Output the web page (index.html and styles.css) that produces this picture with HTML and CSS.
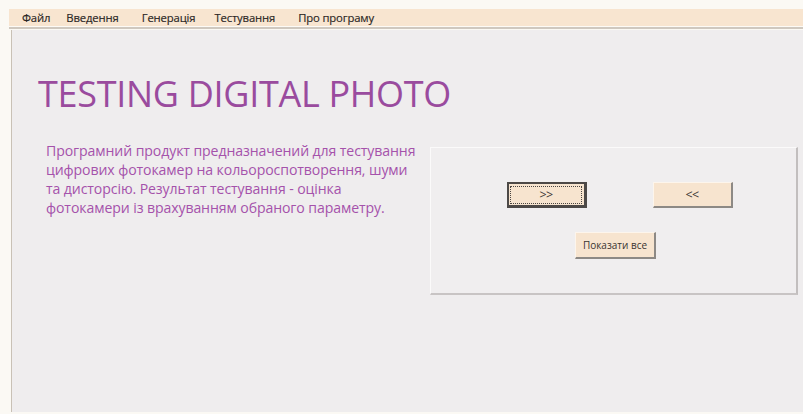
FILE: index.html
```html
<!DOCTYPE html>
<html lang="uk">
<head>
<meta charset="utf-8">
<title>Testing Digital Photo</title>
<link rel="stylesheet" href="styles.css">
</head>
<body>
<div class="app">
  <nav class="menubar">
    <span class="menu-item">Файл</span>
    <span class="menu-item">Введення</span>
    <span class="menu-item">Генерація</span>
    <span class="menu-item">Тестування</span>
    <span class="menu-item">Про програму</span>
  </nav>
  <main class="workspace">
    <h1 class="title">TESTING DIGITAL PHOTO</h1>
    <div class="content">
      <p class="intro">Програмний продукт предназначений для тестування цифрових фотокамер на кольороспотворення, шуми та дисторсію. Результат тестування - оцінка фотокамери із врахуванням обраного параметру.</p>
      <section class="panel">
        <div class="nav-row">
          <button class="btn btn-focus"><span class="focus-ring">&gt;&gt;</span></button>
          <button class="btn">&lt;&lt;</button>
        </div>
        <button class="btn btn-all">Показати все</button>
      </section>
    </div>
  </main>
</div>
</body>
</html>
```
FILE: styles.css
```css
html, body {
  margin: 0;
  padding: 0;
  background: #fbf8f2;
  width: 803px;
  height: 414px;
  overflow: hidden;
}

.app {
  display: flex;
  flex-direction: column;
  height: 414px;
  box-sizing: border-box;
  padding: 9px 0 2px 9px;
  background: #fbf9f4;
  font-family: "Open Sans", "Noto Sans", sans-serif;
}

/* menu strip */
.menubar {
  display: flex;
  align-items: center;
  height: 17px;
  padding-left: 13px;
  background: #f8e5d0;
  border-bottom: 1px solid #fdfaf5;
  box-shadow: 0 2px 0 #cfc8bf;
  font-size: 11.3px;
  color: #2a2624;
  letter-spacing: -0.15px;
  -webkit-text-stroke: 0.15px #2a2624;
}

.menu-item:nth-child(1) { margin-right: 16px; }
.menu-item:nth-child(2) { margin-right: 23px; }
.menu-item:nth-child(3) { margin-right: 19px; }
.menu-item:nth-child(4) { margin-right: 23px; }

/* working area */
.workspace {
  flex: 1;
  margin-top: 3px;
  margin-left: 2px;
  border-left: 1px solid #c9c1b6;
  background: #efedee;
  display: flex;
  flex-direction: column;
}

.title {
  margin: 42px 0 0 26px;
  font-family: "Open Sans", "Noto Sans", sans-serif;
  font-weight: 400;
  font-size: 36px;
  line-height: 44px;
  color: #9a4b9e;
  letter-spacing: -0.3px;
}

.content {
  display: flex;
  align-items: flex-start;
  margin-top: 23px;
}

.intro {
  flex: 0 0 376px;
  margin: 2px 0 0 34px;
  font-size: 14.1px;
  line-height: 19px;
  color: #a552ab;
  letter-spacing: -0.1px;
}

/* raised control panel */
.panel {
  flex: 0 0 368px;
  margin: 8px 5px 0 auto;
  height: 148px;
  box-sizing: border-box;
  background: #f0eeef;
  border-top: 1px solid #fbfafa;
  border-left: 1px solid #fbfafa;
  border-right: 2px solid #c2bebe;
  border-bottom: 2px solid #c8c4c4;
  display: flex;
  flex-direction: column;
  align-items: center;
}

.nav-row {
  display: flex;
  gap: 66px;
  margin-top: 34px;
  margin-left: 12px;
}

.btn {
  width: 80px;
  height: 26px;
  padding: 0;
  background: #f7e4cf;
  border: none;
  border-top: 1px solid #fdf5ec;
  border-left: 1px solid #fdf5ec;
  border-right: 2px solid #8d8985;
  border-bottom: 2px solid #8d8985;
  font-family: "Open Sans", "Noto Sans", sans-serif;
  font-size: 10px;
  color: #3a3432;
  display: flex;
  align-items: center;
  justify-content: center;
}

.nav-row .btn {
  font-size: 12.5px;
  letter-spacing: -0.6px;
  color: #3e3836;
}

.btn-focus {
  border: 2px solid #4d4947;
  border-right-width: 3px;
  border-bottom-width: 3px;
}

.focus-ring {
  display: flex;
  align-items: center;
  justify-content: center;
  width: 70px;
  height: 16px;
  border: 1px dotted #4a4542;
}

.btn-all {
  margin-top: 24px;
  margin-left: 4px;
  width: 81px;
  height: 27px;
}
```
